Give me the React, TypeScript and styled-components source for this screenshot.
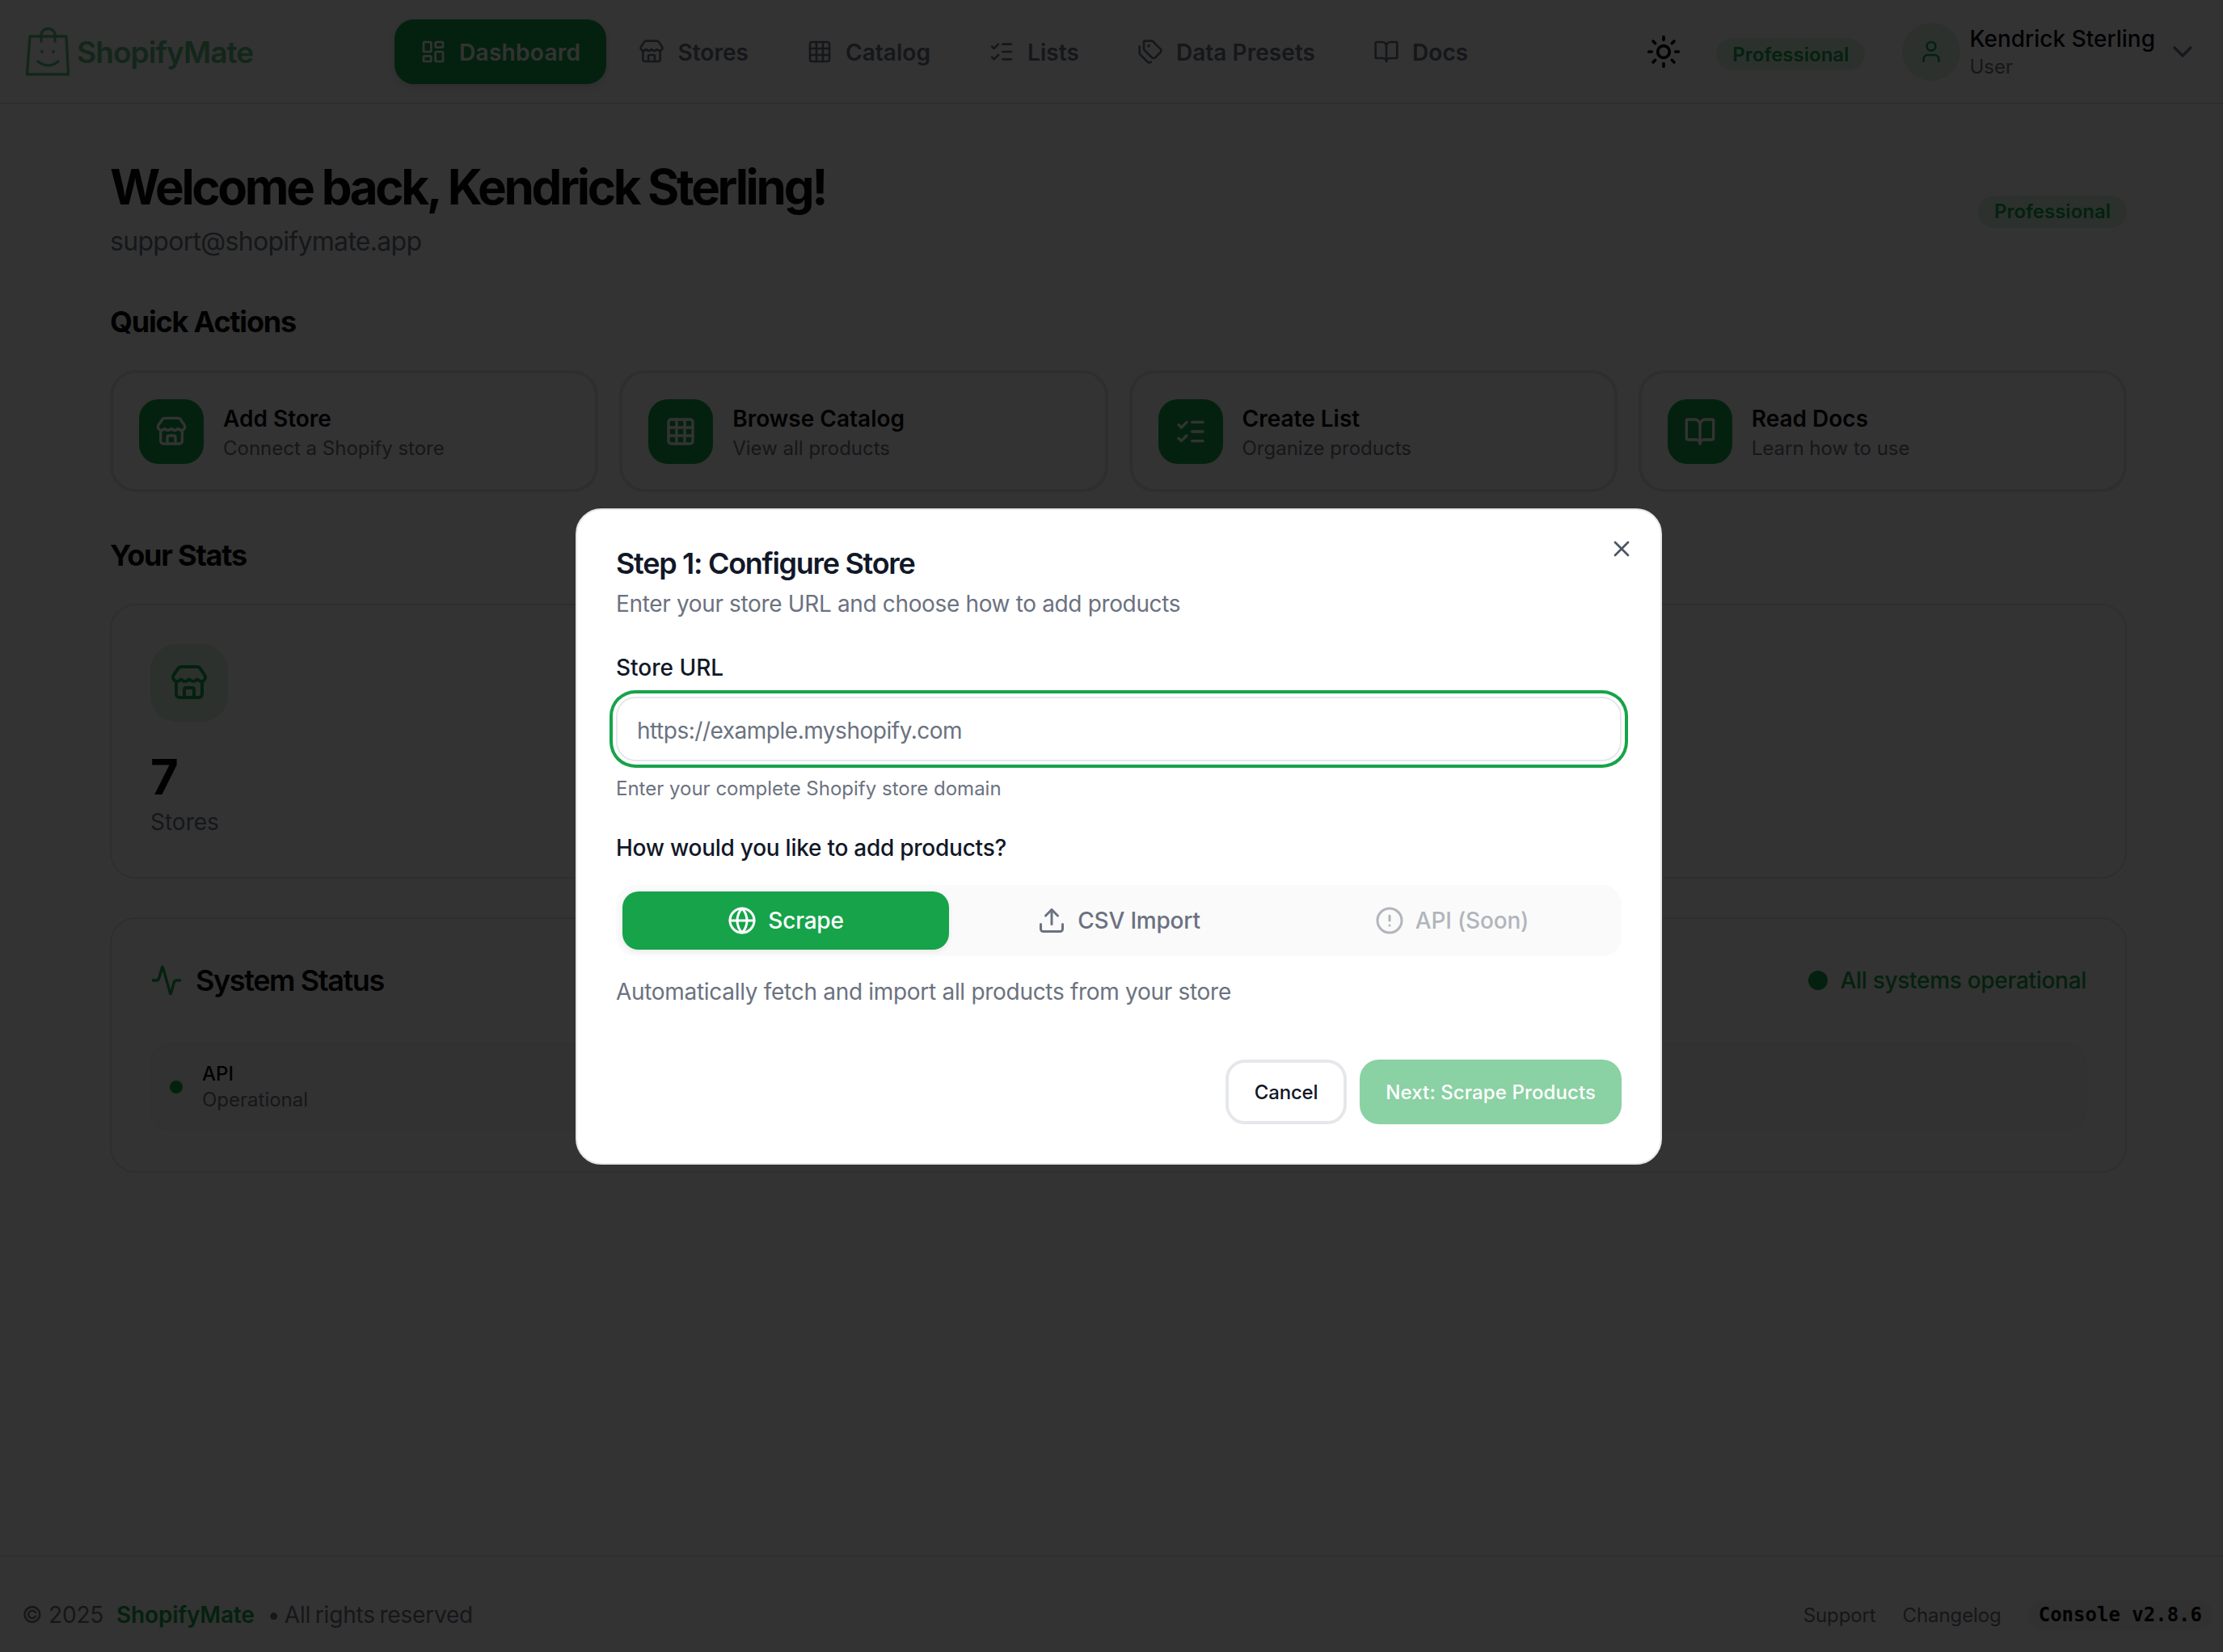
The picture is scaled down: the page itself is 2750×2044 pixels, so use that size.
import React from "react";
import styled, { createGlobalStyle } from "styled-components";
import {
  Activity,
  BookOpen,
  ChevronDown,
  CircleAlert,
  Globe,
  LayoutDashboard,
  ListChecks,
  Grid3x3,
  Store,
  Sun,
  Tags,
  Upload,
  User,
  X,
} from "lucide-react";

const GREEN = "#16a34a";
const LOGO_GREEN = "#62bd84";
const INK = "#09090b";
const MUTED = "#6b7280";
const LINE = "#e5e7eb";
const TINT = "#dcf2e4";

const GlobalStyle = createGlobalStyle`
  html, body {
    margin: 0;
    padding: 0;
    background: #fff;
  }
  body {
    font-family: Inter, "Liberation Sans", sans-serif;
    color: ${INK};
  }
  * {
    box-sizing: border-box;
  }
`;

const Page = styled.div`
  width: 2750px;
  height: 2044px;
  display: flex;
  flex-direction: column;
  overflow: hidden;
`;

const Header = styled.header`
  height: 129px;
  flex: none;
  display: flex;
  align-items: center;
  padding: 0 30px 0 32px;
  border-bottom: 2px solid ${LINE};
`;

const LogoLink = styled.div`
  width: 456px;
  display: flex;
  align-items: center;
  gap: 9px;
  color: ${LOGO_GREEN};
  font-size: 37px;
  font-weight: 600;
  letter-spacing: -0.9px;
`;

const LogoText = styled.span`
  margin-top: 2px;
`;

const Nav = styled.nav`
  display: flex;
  gap: 8px;
`;

const NavItem = styled.div<{ $active?: boolean }>`
  height: 80px;
  padding: 0 32px;
  display: flex;
  align-items: center;
  gap: 16px;
  border-radius: 24px;
  font-size: 28px;
  font-weight: 600;
  letter-spacing: ${(p) => (p.$active ? 0.3 : 0.05)}px;
  color: ${(p) => (p.$active ? "#fff" : MUTED)};
  background: ${(p) => (p.$active ? GREEN : "transparent")};
  box-shadow: ${(p) => (p.$active ? "0 4px 12px rgba(0,0,0,.12)" : "none")};
`;

const NavLabel = styled.span`
  margin-top: 2px;
`;

const HeaderRight = styled.div`
  margin-left: auto;
  display: flex;
  align-items: center;
`;

const ThemeButton = styled.div`
  display: flex;
  margin-right: 43px;
  color: ${INK};
`;

const Badge = styled.span`
  height: 40px;
  padding: 0 20px;
  display: inline-flex;
  align-items: center;
  border-radius: 20px;
  background: ${TINT};
  color: ${GREEN};
  font-size: 24px;
  font-weight: 600;
`;

const HeaderBadge = styled(Badge)`
  margin: 7px 46px 0 0;
`;

const WelcomeBadge = styled(Badge)`
  margin-top: 5px;
`;

const Avatar = styled.div`
  width: 72px;
  height: 72px;
  border-radius: 50%;
  background: ${TINT};
  color: ${GREEN};
  display: flex;
  align-items: center;
  justify-content: center;
`;

const UserBlock = styled.div`
  margin: 0 14px 0 11px;
  display: flex;
  flex-direction: column;
`;

const UserName = styled.div`
  font-size: 28px;
  line-height: 38px;
  font-weight: 500;
`;

const UserRole = styled.div`
  font-size: 24px;
  line-height: 32px;
  color: ${MUTED};
`;

const Main = styled.main`
  flex: 1;
  width: 2495px;
  margin-left: 136px;
  padding-top: 66px;
`;

const WelcomeRow = styled.div`
  display: flex;
  align-items: center;
  justify-content: space-between;
`;

const Heading = styled.h1`
  margin: 0;
  font-size: 60px;
  line-height: 72px;
  font-weight: 700;
  letter-spacing: -3.3px;
`;

const Email = styled.div`
  margin-top: 8px;
  font-size: 32px;
  line-height: 48px;
  letter-spacing: -0.7px;
  color: ${MUTED};
`;

const SectionTitle = styled.h2<{ $top: number }>`
  margin: ${(p) => p.$top}px 0 36px;
  font-size: 36px;
  line-height: 48px;
  font-weight: 700;
  letter-spacing: -1.2px;
`;

const ActionGrid = styled.div`
  display: grid;
  grid-template-columns: repeat(4, 1fr);
  gap: 26px;
`;

const ActionCard = styled.div`
  height: 151px;
  padding: 0 32px;
  display: flex;
  align-items: center;
  gap: 24px;
  border: 4px solid ${LINE};
  border-radius: 32px;
`;

const ActionIcon = styled.div`
  width: 80px;
  height: 80px;
  flex: none;
  border-radius: 24px;
  background: ${GREEN};
  color: #fff;
  display: flex;
  align-items: center;
  justify-content: center;
`;

const ActionCopy = styled.div`
  padding-top: 5px;
`;

const ActionTitle = styled.div`
  font-size: 28px;
  line-height: 36px;
  font-weight: 600;
`;

const ActionText = styled.div`
  margin-top: 1px;
  font-size: 24px;
  line-height: 36px;
  color: ${MUTED};
`;

const Card = styled.section`
  padding: 48px;
  border: 2px solid ${LINE};
  border-radius: 32px;
`;

const StatIcon = styled.div`
  width: 96px;
  height: 96px;
  border-radius: 32px;
  background: ${TINT};
  color: ${GREEN};
  display: flex;
  align-items: center;
  justify-content: center;
`;

const StatValue = styled.div`
  margin-top: 32px;
  font-size: 60px;
  line-height: 72px;
  font-weight: 700;
`;

const StatLabel = styled.div`
  font-size: 28px;
  line-height: 40px;
  color: ${MUTED};
`;

const StatusCard = styled(Card)`
  margin-top: 48px;
  padding-bottom: 50px;
`;

const StatusHead = styled.div`
  height: 56px;
  display: flex;
  align-items: center;
  justify-content: space-between;
`;

const StatusTitle = styled.h3`
  margin: 0;
  display: flex;
  align-items: center;
  gap: 16px;
  font-size: 36px;
  font-weight: 600;
  letter-spacing: -1.4px;
  svg {
    color: ${GREEN};
  }
`;

const Operational = styled.div`
  display: flex;
  align-items: center;
  gap: 16px;
  color: ${GREEN};
  font-size: 28px;
  font-weight: 500;
  letter-spacing: -0.3px;
`;

const Dot = styled.span<{ $size: number }>`
  width: ${(p) => p.$size}px;
  height: ${(p) => p.$size}px;
  border-radius: 50%;
  background: ${GREEN};
  flex: none;
`;

const ServiceRow = styled.div`
  margin-top: 50px;
  padding: 20px 22px;
  display: flex;
  align-items: center;
  gap: 24px;
  border: 2px solid #f3f4f6;
  border-radius: 24px;
  background: #fafafa;
`;

const ServiceName = styled.div`
  font-size: 24px;
  line-height: 32px;
  font-weight: 500;
`;

const ServiceState = styled.div`
  font-size: 24px;
  line-height: 32px;
  color: ${MUTED};
`;

const Footer = styled.footer`
  height: 120px;
  flex: none;
  padding: 48px 13px 0 27px;
  display: flex;
  justify-content: space-between;
  align-items: flex-start;
  border-top: 2px solid ${LINE};
`;

const FooterLeft = styled.div`
  height: 48px;
  display: flex;
  align-items: center;
  font-size: 28px;
  letter-spacing: -0.2px;
  color: ${MUTED};
`;

const FooterBrand = styled.span`
  margin: 0 16px;
  color: ${GREEN};
  font-weight: 600;
`;

const FooterRights = styled.span`
  word-spacing: -2px;
`;

const FooterRight = styled.div`
  height: 48px;
  display: flex;
  align-items: center;
  gap: 33px;
  font-size: 24px;
  letter-spacing: -0.1px;
  color: ${MUTED};
`;

const VersionChip = styled.span`
  padding: 4px 13px;
  border-radius: 16px;
  background: #f3f4f6;
  color: ${INK};
  font-family: "DejaVu Sans Mono", "Liberation Mono", monospace;
  font-size: 24px;
  font-weight: 700;
  letter-spacing: 0;
`;

const Overlay = styled.div`
  position: fixed;
  inset: 0;
  background: rgba(0, 0, 0, 0.8);
`;

const Modal = styled.div`
  position: absolute;
  left: 712px;
  top: 629px;
  width: 1344px;
  height: 812px;
  padding: 46px 48px 48px;
  background: #fff;
  border: 2px solid ${LINE};
  border-radius: 32px;
  color: #111827;
`;

const CloseButton = styled.div`
  position: absolute;
  right: 32px;
  top: 32px;
  display: flex;
  color: #4b5563;
`;

const ModalTitle = styled.h2`
  margin: 0;
  font-size: 36px;
  line-height: 40px;
  font-weight: 600;
  letter-spacing: -1.3px;
`;

const ModalHint = styled.p`
  margin: 10px 0 0;
  font-size: 28px;
  line-height: 40px;
  letter-spacing: -0.35px;
  color: ${MUTED};
`;

const StoreLabel = styled.label`
  display: block;
  margin-top: 39px;
  font-size: 28px;
  line-height: 40px;
  font-weight: 500;
`;

const MethodLabel = styled(StoreLabel)`
  margin-top: 37px;
  letter-spacing: -0.25px;
`;

const UrlInput = styled.input`
  display: block;
  width: 100%;
  height: 80px;
  margin-top: 16px;
  padding: 4px 24px 0;
  border: 2px solid ${LINE};
  border-radius: 24px;
  outline: none;
  background: #fff;
  font-family: inherit;
  font-size: 28px;
  letter-spacing: -0.48px;
  box-shadow: 0 0 0 4px #fff, 0 0 0 8px ${GREEN};
  &::placeholder {
    color: ${MUTED};
    opacity: 1;
  }
`;

const FieldNote = styled.div`
  margin-top: 18px;
  font-size: 24px;
  line-height: 32px;
  color: ${MUTED};
`;

const TabList = styled.div`
  margin-top: 26px;
  padding: 8px;
  display: grid;
  grid-template-columns: repeat(3, 1fr);
  gap: 8px;
  border-radius: 24px;
  background: #fafafa;
`;

const Tab = styled.div<{ $active?: boolean; $disabled?: boolean }>`
  height: 72px;
  display: flex;
  align-items: center;
  justify-content: center;
  gap: 14px;
  border-radius: 20px;
  font-size: 28px;
  font-weight: 500;
  letter-spacing: -0.2px;
  color: ${(p) => (p.$active ? "#fff" : MUTED)};
  background: ${(p) => (p.$active ? GREEN : "transparent")};
  opacity: ${(p) => (p.$disabled ? 0.5 : 1)};
  box-shadow: ${(p) => (p.$active ? "0 2px 6px rgba(0,0,0,.08)" : "none")};
`;

const TabText = styled.p`
  margin: 24px 0 0;
  font-size: 28px;
  line-height: 40px;
  letter-spacing: -0.3px;
  color: ${MUTED};
`;

const ModalActions = styled.div`
  margin-top: 64px;
  display: flex;
  justify-content: flex-end;
  gap: 16px;
`;

const Button = styled.div<{ $primary?: boolean }>`
  height: 80px;
  padding: 0 32px;
  display: flex;
  align-items: center;
  border-radius: 24px;
  font-size: 24px;
  font-weight: 500;
  letter-spacing: ${(p) => (p.$primary ? 0.1 : -0.2)}px;
  border: ${(p) => (p.$primary ? "none" : `4px solid ${LINE}`)};
  color: ${(p) => (p.$primary ? "#fff" : "#111827")};
  background: ${(p) => (p.$primary ? "#8ad1a4" : "#fff")};
`;

const BagLogo = () => (
  <svg width="54" height="60" viewBox="0 0 54 60" fill="none" stroke="currentColor" strokeWidth="3.4" strokeLinecap="round" strokeLinejoin="round">
    <path d="M5 11h45l2.5 47H1.500z" />
    <path d="M19 17V9a8.5 7.5 0 0 1 17 0v8" />
    <path d="M20 29.5v1M34 29.5v1" />
    <path d="M15 42q12.5 10 25 0" />
  </svg>
);

const actions = [
  { icon: Store, title: "Add Store", text: "Connect a Shopify store" },
  { icon: Grid3x3, title: "Browse Catalog", text: "View all products" },
  { icon: ListChecks, title: "Create List", text: "Organize products" },
  { icon: BookOpen, title: "Read Docs", text: "Learn how to use" },
];

const navItems = [
  { icon: LayoutDashboard, label: "Dashboard", active: true },
  { icon: Store, label: "Stores" },
  { icon: Grid3x3, label: "Catalog" },
  { icon: ListChecks, label: "Lists" },
  { icon: Tags, label: "Data Presets" },
  { icon: BookOpen, label: "Docs" },
];

export default function App() {
  return (
    <>
      <GlobalStyle />
      <Page>
        <Header>
          <LogoLink>
            <BagLogo />
            <LogoText>ShopifyMate</LogoText>
          </LogoLink>
          <Nav>
            {navItems.map(({ icon: Icon, label, active }) => (
              <NavItem key={label} $active={active}>
                <Icon size={32} />
                <NavLabel>{label}</NavLabel>
              </NavItem>
            ))}
          </Nav>
          <HeaderRight>
            <ThemeButton>
              <Sun size={44} />
            </ThemeButton>
            <HeaderBadge>Professional</HeaderBadge>
            <Avatar>
              <User size={32} />
            </Avatar>
            <UserBlock>
              <UserName>Kendrick Sterling</UserName>
              <UserRole>User</UserRole>
            </UserBlock>
            <ChevronDown size={40} color={MUTED} />
          </HeaderRight>
        </Header>

        <Main>
          <WelcomeRow>
            <div>
              <Heading>Welcome back, Kendrick Sterling!</Heading>
              <Email>support@shopifymate.app</Email>
            </div>
            <WelcomeBadge>Professional</WelcomeBadge>
          </WelcomeRow>

          <SectionTitle $top={51}>Quick Actions</SectionTitle>
          <ActionGrid>
            {actions.map(({ icon: Icon, title, text }) => (
              <ActionCard key={title}>
                <ActionIcon>
                  <Icon size={40} />
                </ActionIcon>
                <ActionCopy>
                  <ActionTitle>{title}</ActionTitle>
                  <ActionText>{text}</ActionText>
                </ActionCopy>
              </ActionCard>
            ))}
          </ActionGrid>

          <SectionTitle $top={54}>Your Stats</SectionTitle>
          <Card>
            <StatIcon>
              <Store size={48} />
            </StatIcon>
            <StatValue>7</StatValue>
            <StatLabel>Stores</StatLabel>
          </Card>

          <StatusCard>
            <StatusHead>
              <StatusTitle>
                <Activity size={40} />
                System Status
              </StatusTitle>
              <Operational>
                <Dot $size={24} />
                All systems operational
              </Operational>
            </StatusHead>
            <ServiceRow>
              <Dot $size={16} />
              <div>
                <ServiceName>API</ServiceName>
                <ServiceState>Operational</ServiceState>
              </div>
            </ServiceRow>
          </StatusCard>
        </Main>

        <Footer>
          <FooterLeft>
            © 2025
            <FooterBrand>ShopifyMate</FooterBrand>
            <FooterRights>• All rights reserved</FooterRights>
          </FooterLeft>
          <FooterRight>
            <span>Support</span>
            <span>Changelog</span>
            <VersionChip>Console v2.8.6</VersionChip>
          </FooterRight>
        </Footer>
      </Page>

      <Overlay>
        <Modal>
          <CloseButton>
            <X size={32} />
          </CloseButton>
          <ModalTitle>Step 1: Configure Store</ModalTitle>
          <ModalHint>Enter your store URL and choose how to add products</ModalHint>

          <StoreLabel>Store URL</StoreLabel>
          <UrlInput placeholder="https://example.myshopify.com" readOnly />
          <FieldNote>Enter your complete Shopify store domain</FieldNote>

          <MethodLabel>How would you like to add products?</MethodLabel>
          <TabList>
            <Tab $active>
              <Globe size={36} />
              Scrape
            </Tab>
            <Tab>
              <Upload size={36} />
              CSV Import
            </Tab>
            <Tab $disabled>
              <CircleAlert size={36} />
              API (Soon)
            </Tab>
          </TabList>
          <TabText>Automatically fetch and import all products from your store</TabText>

          <ModalActions>
            <Button>Cancel</Button>
            <Button $primary>Next: Scrape Products</Button>
          </ModalActions>
        </Modal>
      </Overlay>
    </>
  );
}
